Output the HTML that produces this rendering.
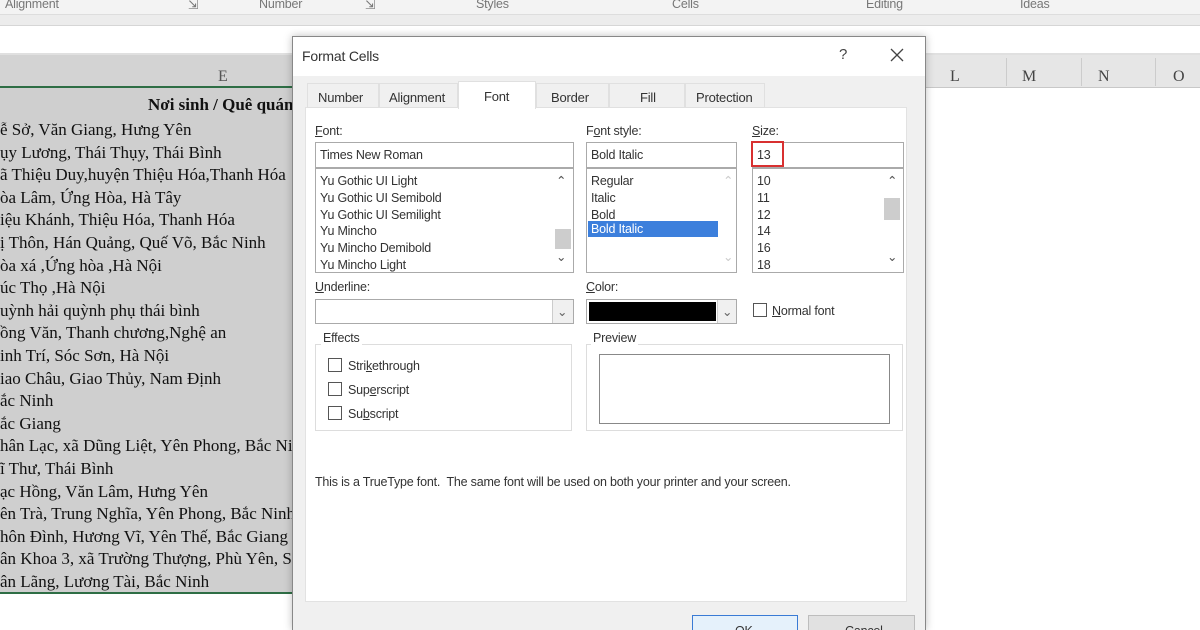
<!DOCTYPE html>
<html><head><meta charset="utf-8"><style>
*{margin:0;padding:0;box-sizing:border-box}
html,body{width:1200px;height:630px;overflow:hidden}
body{background:#fff;position:relative;font-family:"Liberation Sans",sans-serif;font-size:12px;color:#222}
.a{position:absolute}
.ui{font-family:"Liberation Sans",sans-serif;font-size:12.5px;color:#333;letter-spacing:-0.2px;white-space:nowrap}
.sh{font-family:"Liberation Serif",serif;font-size:17px;color:#111;white-space:nowrap}
.cb{position:absolute;width:14px;height:14px;border:1px solid #555;background:#fff}
.box{position:absolute;border:1px solid #aaa;background:#fff}
</style></head><body>
<div class="a" style="left:0;top:0;width:1200px;height:14px;background:#f3f3f3"></div>
<div class="a ui" style="left:5px;top:-3px;color:#777">Alignment</div>
<div class="a ui" style="left:188px;top:-3px;color:#777">⇲</div>
<div class="a ui" style="left:259px;top:-3px;color:#777">Number</div>
<div class="a ui" style="left:365px;top:-3px;color:#777">⇲</div>
<div class="a ui" style="left:476px;top:-3px;color:#777">Styles</div>
<div class="a ui" style="left:672px;top:-3px;color:#777">Cells</div>
<div class="a ui" style="left:866px;top:-3px;color:#777">Editing</div>
<div class="a ui" style="left:1020px;top:-3px;color:#777">Ideas</div>
<div class="a" style="left:0;top:14px;width:1200px;height:12px;background:#ececec;border-top:1px solid #ddd;border-bottom:1px solid #d6d6d6"></div>
<div class="a" style="left:0;top:53px;width:1200px;height:2px;background:#e0e0e0"></div>
<div class="a" style="left:0;top:55px;width:1200px;height:33px;background:#e6e6e6;border-bottom:1px solid #c8c8c8"></div>
<div class="a" style="left:0;top:55px;width:293px;height:33px;background:#d3d3d3"></div>
<div class="a" style="left:0;top:86px;width:293px;height:2px;background:#2e6e45"></div>
<div class="a sh" style="left:218px;top:68px;color:#555;font-size:16px">E</div>
<div class="a sh" style="left:950px;top:68px;color:#444;font-size:16px">L</div>
<div class="a sh" style="left:1022px;top:68px;color:#444;font-size:16px">M</div>
<div class="a sh" style="left:1098px;top:68px;color:#444;font-size:16px">N</div>
<div class="a sh" style="left:1173px;top:68px;color:#444;font-size:16px">O</div>
<div class="a" style="left:1006px;top:58px;width:1px;height:28px;background:#ccc"></div>
<div class="a" style="left:1081px;top:58px;width:1px;height:28px;background:#ccc"></div>
<div class="a" style="left:1155px;top:58px;width:1px;height:28px;background:#ccc"></div>
<div class="a" style="left:0;top:88px;width:293px;height:505px;background:#cfcfcf;overflow:hidden">
<div class="a sh" style="left:148px;top:7px;font-weight:bold">Nơi sinh / Quê quán</div>
<div class="a sh" style="left:0;top:31px;line-height:22.6px">ễ Sở, Văn Giang, Hưng Yên<br>ụy Lương, Thái Thụy, Thái Bình<br>ã Thiệu Duy,huyện Thiệu Hóa,Thanh Hóa<br>òa Lâm, Ứng Hòa, Hà Tây<br>iệu Khánh, Thiệu Hóa, Thanh Hóa<br>ị Thôn, Hán Quảng, Quế Võ, Bắc Ninh<br>òa xá ,Ứng hòa ,Hà Nội<br>úc Thọ ,Hà Nội<br>uỳnh hải quỳnh phụ thái bình<br>ồng Văn, Thanh chương,Nghệ an<br>inh Trí, Sóc Sơn, Hà Nội<br>iao Châu, Giao Thủy, Nam Định<br>ắc Ninh<br>ắc Giang<br>hân Lạc, xã Dũng Liệt, Yên Phong, Bắc Ninh<br>ĩ Thư, Thái Bình<br>ạc Hồng, Văn Lâm, Hưng Yên<br>ên Trà, Trung Nghĩa, Yên Phong, Bắc Ninh<br>hôn Đình, Hương Vĩ, Yên Thế, Bắc Giang<br>ân Khoa 3, xã Trường Thượng, Phù Yên, Sơn La<br>ân Lãng, Lương Tài, Bắc Ninh</div>
</div>
<div class="a" style="left:0;top:592px;width:293px;height:2px;background:#2e6e45"></div>
<div class="a" style="left:292px;top:36px;width:634px;height:594px;background:#f0f0f0;border:1px solid #888;border-bottom:none;box-shadow:0 0 8px rgba(0,0,0,.25);overflow:hidden">
<div class="a" style="left:0;top:0;width:632px;height:39px;background:#fff"></div>
<div class="a ui" style="left:9px;top:11px;font-size:14px;color:#333">Format Cells</div>
<div class="a ui" style="left:546px;top:9px;font-size:15px;color:#444">?</div>
<svg class="a" style="left:597px;top:11px" width="14" height="14"><path d="M1 1L13 13M13 1L1 13" stroke="#444" stroke-width="1.3"/></svg>
<div class="a" style="left:12px;top:70px;width:602px;height:495px;background:#fff;border:1px solid #e2e2e2"></div>
<div class="a" style="left:14px;top:46px;width:72px;height:25px;background:#f0f0f0;border:1px solid #e0e0e0"></div>
<div class="a" style="left:86px;top:46px;width:79px;height:25px;background:#f0f0f0;border:1px solid #e0e0e0"></div>
<div class="a" style="left:165px;top:44px;width:78px;height:28px;background:#fff;border:1px solid #e0e0e0;border-bottom:none"></div>
<div class="a" style="left:243px;top:46px;width:73px;height:25px;background:#f0f0f0;border:1px solid #e0e0e0"></div>
<div class="a" style="left:316px;top:46px;width:76px;height:25px;background:#f0f0f0;border:1px solid #e0e0e0"></div>
<div class="a" style="left:392px;top:46px;width:80px;height:25px;background:#f0f0f0;border:1px solid #e0e0e0"></div>
<div class="a ui" style="left:25px;top:53px;font-size:13px">Number</div>
<div class="a ui" style="left:96px;top:53px;font-size:13px">Alignment</div>
<div class="a ui" style="left:191px;top:52px;font-size:13px">Font</div>
<div class="a ui" style="left:258px;top:53px;font-size:13px">Border</div>
<div class="a ui" style="left:347px;top:53px;font-size:13px">Fill</div>
<div class="a ui" style="left:403px;top:53px;font-size:13px">Protection</div>
<div class="a ui" style="left:22px;top:87px"><u>F</u>ont:</div>
<div class="box" style="left:22px;top:105px;width:259px;height:26px"></div>
<div class="a ui" style="left:27px;top:111px">Times New Roman</div>
<div class="box" style="left:22px;top:131px;width:259px;height:105px"></div>
<div class="a ui" style="left:27px;top:136px;line-height:16.8px">Yu Gothic UI Light<br>Yu Gothic UI Semibold<br>Yu Gothic UI Semilight<br>Yu Mincho<br>Yu Mincho Demibold<br>Yu Mincho Light</div>
<div class="a" style="left:262px;top:192px;width:16px;height:20px;background:#cdcdcd"></div>
<div class="a ui" style="left:263px;top:136px;color:#555">⌃</div>
<div class="a ui" style="left:263px;top:212px;color:#555">⌄</div>
<div class="a ui" style="left:293px;top:87px">F<u>o</u>nt style:</div>
<div class="box" style="left:293px;top:105px;width:151px;height:26px"></div>
<div class="a ui" style="left:298px;top:111px">Bold Italic</div>
<div class="box" style="left:293px;top:131px;width:151px;height:105px"></div>
<div class="a ui" style="left:298px;top:136px;line-height:16.8px">Regular<br>Italic<br>Bold</div>
<div class="a ui" style="left:295px;top:184px;width:130px;height:16px;background:#3c7fdc;color:#fff;padding-left:3px;line-height:16px">Bold Italic</div>
<div class="a ui" style="left:430px;top:136px;color:#ccc">⌃</div>
<div class="a ui" style="left:430px;top:212px;color:#ccc">⌄</div>
<div class="a ui" style="left:459px;top:87px"><u>S</u>ize:</div>
<div class="box" style="left:459px;top:105px;width:152px;height:26px"></div>
<div class="a" style="left:458px;top:104px;width:33px;height:26px;border:2px solid #d83030"></div>
<div class="a ui" style="left:464px;top:111px">13</div>
<div class="box" style="left:459px;top:131px;width:152px;height:105px"></div>
<div class="a ui" style="left:464px;top:136px;line-height:16.8px">10<br>11<br>12<br>14<br>16<br>18</div>
<div class="a" style="left:591px;top:161px;width:16px;height:22px;background:#cdcdcd"></div>
<div class="a ui" style="left:594px;top:136px;color:#555">⌃</div>
<div class="a ui" style="left:594px;top:212px;color:#555">⌄</div>
<div class="a ui" style="left:22px;top:243px"><u>U</u>nderline:</div>
<div class="box" style="left:22px;top:262px;width:259px;height:25px"></div>
<div class="a" style="left:259px;top:263px;width:21px;height:23px;background:#f0f0f0;border-left:1px solid #ccc"></div>
<div class="a ui" style="left:264px;top:267px;color:#666">⌄</div>
<div class="a ui" style="left:293px;top:243px"><u>C</u>olor:</div>
<div class="box" style="left:293px;top:262px;width:151px;height:25px"></div>
<div class="a" style="left:296px;top:265px;width:127px;height:19px;background:#000"></div>
<div class="a" style="left:424px;top:263px;width:19px;height:23px;background:#f0f0f0;border-left:1px solid #ccc"></div>
<div class="a ui" style="left:429px;top:267px;color:#666">⌄</div>
<div class="cb" style="left:460px;top:266px"></div>
<div class="a ui" style="left:479px;top:267px"><u>N</u>ormal font</div>
<div class="a" style="left:22px;top:307px;width:257px;height:87px;border:1px solid #ddd"></div>
<div class="a ui" style="left:28px;top:294px;background:#fff;padding:0 2px">Effects</div>
<div class="cb" style="left:35px;top:321px"></div><div class="a ui" style="left:55px;top:322px">Stri<u>k</u>ethrough</div>
<div class="cb" style="left:35px;top:345px"></div><div class="a ui" style="left:55px;top:346px">Sup<u>e</u>rscript</div>
<div class="cb" style="left:35px;top:369px"></div><div class="a ui" style="left:55px;top:370px">Su<u>b</u>script</div>
<div class="a" style="left:293px;top:307px;width:317px;height:87px;border:1px solid #ddd"></div>
<div class="a ui" style="left:298px;top:294px;background:#fff;padding:0 2px">Preview</div>
<div class="a" style="left:306px;top:317px;width:291px;height:70px;border:1px solid #888;background:#fff"></div>
<div class="a ui" style="left:22px;top:438px">This is a TrueType font.&nbsp; The same font will be used on both your printer and your screen.</div>
<div class="a" style="left:399px;top:578px;width:106px;height:30px;background:#e5f1fb;border:1px solid #3a7bd5"></div>
<div class="a ui" style="left:442px;top:587px">OK</div>
<div class="a" style="left:515px;top:578px;width:107px;height:30px;background:#e1e1e1;border:1px solid #bdbdbd"></div>
<div class="a ui" style="left:552px;top:587px">Cancel</div>
</div>
</body></html>
